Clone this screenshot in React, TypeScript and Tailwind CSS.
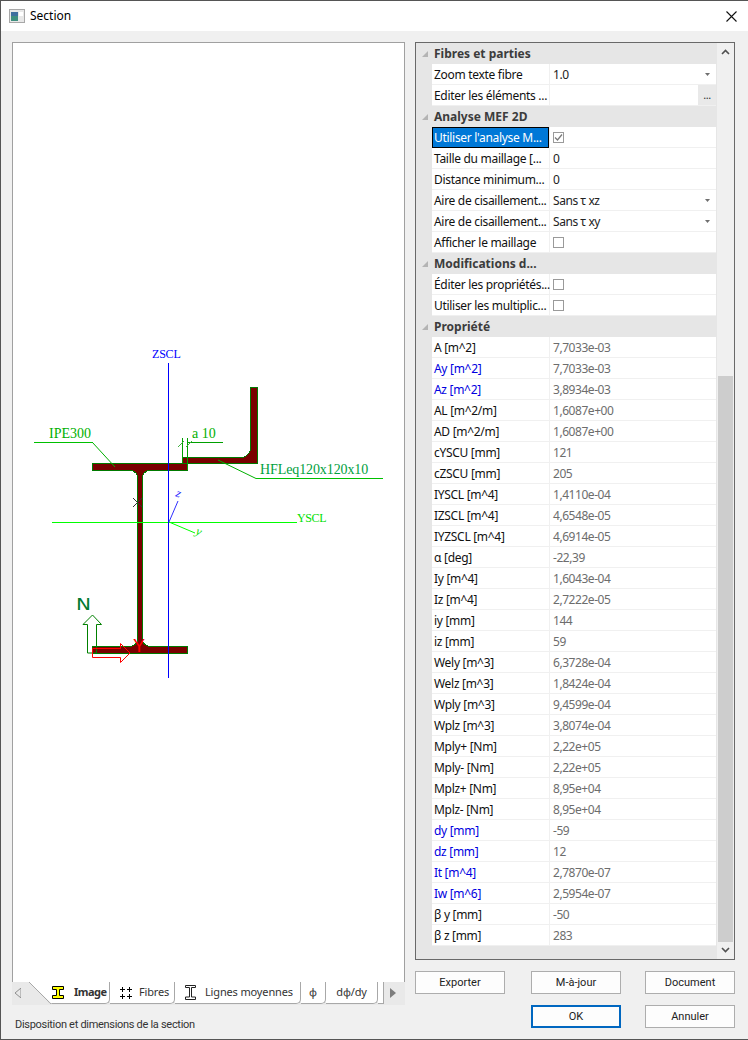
import React from "react";

const UI = "font-['Noto_Sans',sans-serif]";
const BTN_FONT = "font-['Roboto',sans-serif]";

type Row = {
  label: string;
  value?: string;
  kind?: "head" | "combo" | "check" | "checked" | "dots" | "edit" | "selected";
  blue?: boolean;
};

const rows: Row[] = [
  { label: "Fibres et parties", kind: "head" },
  { label: "Zoom texte fibre", value: "1.0", kind: "combo" },
  { label: "Editer les éléments ...", kind: "dots" },
  { label: "Analyse MEF 2D", kind: "head" },
  { label: "Utiliser l'analyse M...", kind: "selected" },
  { label: "Taille du maillage [...", value: "0", kind: "edit" },
  { label: "Distance minimum...", value: "0", kind: "edit" },
  { label: "Aire de cisaillement...", value: "Sans τ xz", kind: "combo" },
  { label: "Aire de cisaillement...", value: "Sans τ xy", kind: "combo" },
  { label: "Afficher le maillage", kind: "check" },
  { label: "Modifications d...", kind: "head" },
  { label: "Éditer les propriétés...", kind: "check" },
  { label: "Utiliser les multiplic...", kind: "check" },
  { label: "Propriété", kind: "head" },
  { label: "A [m^2]", value: "7,7033e-03" },
  { label: "Ay [m^2]", value: "7,7033e-03", blue: true },
  { label: "Az [m^2]", value: "3,8934e-03", blue: true },
  { label: "AL [m^2/m]", value: "1,6087e+00" },
  { label: "AD [m^2/m]", value: "1,6087e+00" },
  { label: "cYSCU [mm]", value: "121" },
  { label: "cZSCU [mm]", value: "205" },
  { label: "IYSCL [m^4]", value: "1,4110e-04" },
  { label: "IZSCL [m^4]", value: "4,6548e-05" },
  { label: "IYZSCL [m^4]", value: "4,6914e-05" },
  { label: "α [deg]", value: "-22,39" },
  { label: "Iy [m^4]", value: "1,6043e-04" },
  { label: "Iz [m^4]", value: "2,7222e-05" },
  { label: "iy [mm]", value: "144" },
  { label: "iz [mm]", value: "59" },
  { label: "Wely [m^3]", value: "6,3728e-04" },
  { label: "Welz [m^3]", value: "1,8424e-04" },
  { label: "Wply [m^3]", value: "9,4599e-04" },
  { label: "Wplz [m^3]", value: "3,8074e-04" },
  { label: "Mply+ [Nm]", value: "2,22e+05" },
  { label: "Mply- [Nm]", value: "2,22e+05" },
  { label: "Mplz+ [Nm]", value: "8,95e+04" },
  { label: "Mplz- [Nm]", value: "8,95e+04" },
  { label: "dy [mm]", value: "-59", blue: true },
  { label: "dz [mm]", value: "12", blue: true },
  { label: "It [m^4]", value: "2,7870e-07", blue: true },
  { label: "Iw [m^6]", value: "2,5954e-07", blue: true },
  { label: "β y [mm]", value: "-50" },
  { label: "β z [mm]", value: "283" },
];

function CheckBox({ checked }: { checked?: boolean }) {
  return (
    <span className="w-[11px] h-[11px] border border-[#9a9a9a] bg-white flex items-center justify-center">
      {checked && (
        <svg width="9" height="9" viewBox="0 0 9 9">
          <path d="M1 4.5 L3.5 7 L8 1.5" fill="none" stroke="#7a7a7a" strokeWidth="1.3" />
        </svg>
      )}
    </span>
  );
}

function ComboArrow() {
  return (
    <svg width="5" height="3" viewBox="0 0 5 3" className="absolute right-[6px] top-[9px]">
      <path d="M0 0 H5 L2.5 3 Z" fill="#6f6f6f" />
    </svg>
  );
}

function GridRow({ row }: { row: Row }) {
  if (row.kind === "head") {
    return (
      <div className="h-[21px] flex items-center bg-[#e6e6e6] relative">
        <svg width="6" height="6" viewBox="0 0 6 6" className="ml-[6px] mr-[6px]">
          <path d="M6 0 V6 H0 Z" fill="#b4b4b4" />
        </svg>
        <span className="text-[12px] font-bold text-[#3c3c3c] whitespace-nowrap">{row.label}</span>
      </div>
    );
  }
  const selected = row.kind === "selected";
  return (
    <div className="h-[21px] flex bg-[#e6e6e6]">
      <div className="w-[16px]" />
      <div className="w-[284px] h-[21px] flex bg-[#f0f0f0]">
        <div
          className={
            selected
              ? "w-[117px] h-[21px] bg-[#0078d7] border border-black text-white flex items-center pl-[1px] pt-[1px] text-[12px] tracking-[-0.3px] whitespace-nowrap"
              : `w-[117px] h-[20px] bg-white flex items-center pl-[2px] pt-[2px] text-[12px] tracking-[-0.3px] whitespace-nowrap ${row.blue ? "text-[#0000e0]" : "text-[#111111]"}`
          }
        >
          {row.label}
        </div>
        <div className="relative w-[166px] h-[20px] ml-[1px] bg-white flex items-center pl-[3px] pt-[1px] text-[12px] tracking-[-0.45px] whitespace-nowrap text-[#6d6d6d]">
          {(row.kind === "combo" || row.kind === "edit") && <span className="text-[#222222]">{row.value}</span>}
          {!row.kind && row.value}
          {row.kind === "combo" && <ComboArrow />}
          {row.kind === "dots" && (
            <span className="absolute right-0 top-0 w-[18px] h-[20px] bg-[#e9e9e9] flex items-center justify-center text-[#333333] text-[11px]">
              ...
            </span>
          )}
          {row.kind === "selected" && <CheckBox checked />}
          {row.kind === "check" && <CheckBox />}
        </div>
      </div>
    </div>
  );
}

function SectionDrawing() {
  const serif = { fontFamily: "'Liberation Serif', serif", fontSize: 14 };
  return (
    <svg width="391" height="939" viewBox="13 43 391 939" className="block" shapeRendering="crispEdges">
      {/* I section */}
      <path
        d="M92.5 463.5 H187.5 V470.5 H150 Q142.5 471 142.5 478 V640 Q142.5 645 150 646.5 H187.5 V653.5 H92.5 V646.5 H130 Q137.5 645 137.5 640 V478 Q137.5 471 130 470.5 H92.5 Z"
        fill="#7a0000"
        stroke="#007a00"
        strokeWidth="1"
      />
      {/* angle */}
      <path
        d="M250.5 387.5 H257.5 V463.5 H182.5 V457.5 H243 Q250.5 455 250.5 447 Z"
        fill="#7a0000"
        stroke="#007a00"
        strokeWidth="1"
      />
      {/* weld */}
      <path d="M182.5 438 V463 M187.5 438 V470 M187.5 442.5 H223" stroke="#00a000" fill="none" />
      <path d="M178 447 L184 441 M186 447 L192 441" stroke="#40b040" fill="none" shapeRendering="auto" />
      {/* leaders */}
      <path d="M34 442.5 H92.5" stroke="#00c000" />
      <path d="M92.5 442.5 L115 467" stroke="#00b000" shapeRendering="auto" fill="none" />
      <path d="M218 460 L256 478.5" stroke="#00b000" shapeRendering="auto" fill="none" />
      <path d="M256 478.5 H383" stroke="#00c000" />
      {/* axes */}
      <path d="M52 522.5 H297" stroke="#00ff00" />
      <path d="M168.5 363 V678" stroke="#0000ff" />
      <path d="M169 522 L178 501" stroke="#3030ff" shapeRendering="auto" />
      <path d="M169 522 L195 533" stroke="#00ff00" shapeRendering="auto" />
      <path d="M133 498 L142 507 M142 498 L133 507" stroke="#333333" shapeRendering="auto" />
      {/* arrows */}
      <path
        d="M87.5 653 V624.5 H83 L92.5 615 L101.5 624.5 H96.5 V653 Z"
        fill="none"
        stroke="#008000"
        shapeRendering="auto"
      />
      <path
        d="M92.5 648.5 H120.5 V643.5 L130 653 L120.5 662.5 V657.5 H92.5 Z"
        fill="none"
        stroke="#ff0000"
        shapeRendering="auto"
      />
      <text x="152" y="358" fill="#0000ff" style={{ ...serif, fontSize: 12, letterSpacing: -0.2 }}>ZSCL</text>
      <text x="49" y="438" fill="#00b000" style={serif}>IPE300</text>
      <text x="192" y="438" fill="#00b000" style={serif}>a 10</text>
      <text x="260" y="474" fill="#00a040" style={{ ...serif, letterSpacing: -0.1 }}>HFLeq120x120x10</text>
      <text x="297" y="522" fill="#00e000" style={{ ...serif, fontSize: 12, letterSpacing: -0.4 }}>YSCL</text>
      <text x="176" y="497" fill="#2020ff" transform="rotate(22 178 494)" style={{ ...serif, fontSize: 12, fontStyle: "italic" }}>z</text>
      <text x="196" y="535" fill="#00e000" transform="rotate(22 198 532)" style={{ ...serif, fontSize: 12, fontStyle: "italic" }}>y</text>
      <text x="76" y="610" fill="#007a30" textLength="15" lengthAdjust="spacingAndGlyphs" style={{ fontFamily: "'DejaVu Sans', sans-serif", fontSize: 16 }}>N</text>
      <text x="133" y="652" fill="#ff0000" style={{ fontFamily: "'Liberation Sans', sans-serif", fontSize: 18 }}>Y</text>
    </svg>
  );
}

function Tab({ width, pad, gap, children, center }: { width: string; pad?: string; gap?: string; children: React.ReactNode; center?: boolean }) {
  return (
    <div
      className={`${width} ${pad ?? ""} ${gap ?? ""} h-[22px] shrink-0 bg-white border-r border-b border-[#a8a8a8] rounded-br-[5px] flex items-center ${center ? "justify-center" : ""} text-[11px] tracking-[-0.15px] text-[#333333]`}
    >
      {children}
    </div>
  );
}

function Btn({ children, primary }: { children: React.ReactNode; primary?: boolean }) {
  return (
    <button
      className={`${BTN_FONT} w-[90px] h-[23px] pt-[1px] bg-[#fdfdfd] flex items-center justify-center text-[11px] text-[#222222] ${primary ? "border-2 border-[#0067c0]" : "border border-[#adadad]"}`}
    >
      {children}
    </button>
  );
}

export default function App() {
  return (
    <div className={`${UI} w-[748px] h-[1040px] flex flex-col bg-[#f0f0f0] border-t border-l border-b border-[#555555] overflow-hidden`}>
      {/* title bar */}
      <div className="h-[30px] bg-white flex items-center shrink-0">
        <svg width="16" height="14" viewBox="0 0 16 14" className="ml-[8px]">
          <rect x="0.5" y="0.5" width="15" height="13" fill="#e8e8e8" stroke="#a8a8a8" />
          <rect x="2" y="3" width="7" height="9" fill="#3f8f7f" />
          <rect x="2" y="3" width="7" height="4" fill="#3f6f9f" />
          <rect x="10" y="3" width="4" height="4" fill="#ffffff" />
        </svg>
        <span className="ml-[5px] text-[12px] text-black">Section</span>
        <svg width="11" height="11" viewBox="0 0 11 11" className="ml-auto mr-[11px]">
          <path d="M0.5 0.5 L10.5 10.5 M10.5 0.5 L0.5 10.5" stroke="#111111" strokeWidth="1.1" />
        </svg>
      </div>

      <div className="flex-1 flex gap-[10px] pl-[11px] pt-[11px] min-h-0">
        {/* left column */}
        <div className="w-[393px] flex flex-col">
          <div className="h-[940px] bg-white border-t border-l border-r border-[#a0a0a0]">
            <SectionDrawing />
          </div>
          <div className="h-[23px] bg-[#e9e9e9] flex items-start relative">
            <svg width="6" height="10" viewBox="0 0 6 10" className="ml-[3px] mt-[6px] shrink-0">
              <path d="M6 0 V10 L0 5 Z" fill="none" stroke="#8f8f8f" />
            </svg>
            <svg width="23" height="22" viewBox="0 0 23 22" className="ml-[8px] shrink-0">
              <path d="M0 0 L21 20 Q22 22 23 22 V0 Z" fill="#ffffff" />
              <path d="M0 0 L19 19 Q21 22 23 22" fill="none" stroke="#a8a8a8" />
            </svg>
            <Tab width="w-[58px]" gap="gap-[10px]">
              <svg width="12" height="13" viewBox="0 0 12 13" className="shrink-0">
                <path d="M0.5 0.5 H11.5 V3.5 H7.5 V9.5 H11.5 V12.5 H0.5 V9.5 H4.5 V3.5 H0.5 Z" fill="#ffff00" stroke="#000000" />
              </svg>
              <span className="font-bold tracking-[-0.5px]">Image</span>
            </Tab>
            <Tab width="w-[65px]" pad="pl-[9px]" gap="gap-[6px]">
              <svg width="14" height="14" viewBox="0 0 14 14" className="shrink-0">
                <path d="M3.5 1 V6 M1 3.5 H6 M10.5 1 V6 M8 3.5 H13 M3.5 8 V13 M1 10.5 H6 M10.5 8 V13 M8 10.5 H13" stroke="#000000" />
              </svg>
              <span>Fibres</span>
            </Tab>
            <Tab width="w-[126px]" pad="pl-[10px]" gap="gap-[9px]">
              <svg width="11" height="15" viewBox="0 0 11 15" className="shrink-0">
                <path d="M0.5 0.5 H10.5 V2.5 H6.5 V12 H10.5 V14.5 H0.5 V12 H4.5 V2.5 H0.5 Z" fill="#ffffff" stroke="#222222" />
              </svg>
              <span>Lignes moyennes</span>
            </Tab>
            <Tab width="w-[25px]" center><span>φ</span></Tab>
            <Tab width="w-[52px]" center><span>dφ/dy</span></Tab>
            <div className="w-[6px] h-[22px] bg-white border-r border-b border-[#a8a8a8]" />
            <svg width="6" height="10" viewBox="0 0 6 10" className="ml-[6px] mt-[6px] shrink-0">
              <path d="M0 0 V10 L6 5 Z" fill="#7d7d7d" />
            </svg>
          </div>
          <div className={`${BTN_FONT} mt-[12px] ml-[3px] text-[11px] tracking-[-0.3px] text-[#333333] whitespace-nowrap`}>
            Disposition et dimensions de la section
          </div>
        </div>

        {/* right column */}
        <div className="w-[320px] flex flex-col">
          <div className="h-[918px] border border-[#696969] flex bg-[#e6e6e6]">
            <div className="w-[301px] shrink-0">
              {rows.map((row, i) => (
                <GridRow key={i} row={row} />
              ))}
            </div>
            <div className="w-[17px] bg-[#f0f0f0] flex flex-col items-center">
              <svg width="9" height="6" viewBox="0 0 9 6" className="mt-[6px]">
                <path d="M1 5 L4.5 1.5 L8 5" fill="none" stroke="#505050" strokeWidth="1.6" />
              </svg>
              <div className="w-[15px] h-[566px] bg-[#cdcdcd] mt-[321px]" />
              <svg width="9" height="6" viewBox="0 0 9 6" className="mt-[5px]">
                <path d="M1 1 L4.5 4.5 L8 1" fill="none" stroke="#505050" strokeWidth="1.6" />
              </svg>
            </div>
          </div>
          <div className="mt-[11px] flex">
            <Btn>Exporter</Btn>
            <div className="ml-[26px]"><Btn>M-à-jour</Btn></div>
            <div className="ml-[24px]"><Btn>Document</Btn></div>
          </div>
          <div className="mt-[11px] flex">
            <div className="ml-[116px]"><Btn primary>OK</Btn></div>
            <div className="ml-[24px]"><Btn>Annuler</Btn></div>
          </div>
        </div>
      </div>
    </div>
  );
}
